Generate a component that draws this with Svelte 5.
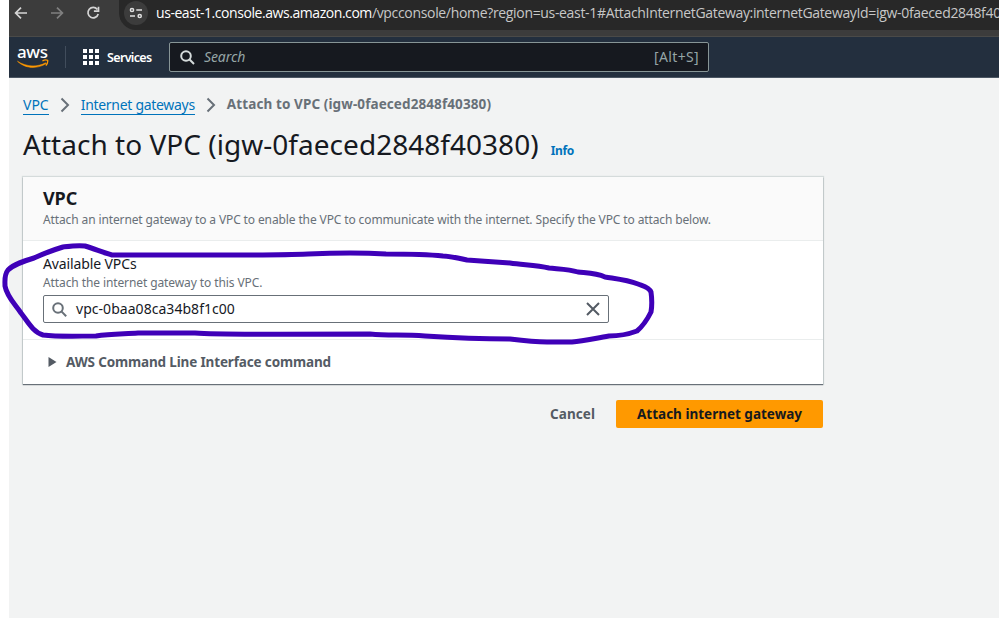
<script>
  const dots = [0, 6, 12];
</script>

<div class="screen">
  <div class="browser">
    <svg class="navicons" width="100" height="30" viewBox="0 0 100 30" fill="none" stroke-width="1.7">
      <path d="M18 13H7M12 7.6 6.6 13 12 18.4" stroke="#d5d5d5" />
      <path d="M42 13h11M48 7.6 53.400 13 48 18.400" stroke="#808080" />
      <path d="M88.300 9.400A5.200 5.200 0 1 0 89.200 14M89.500 6.800v4.400h-4.600" stroke="#d5d5d5" />
    </svg>
    <div class="address">
      <div class="site">
        <svg width="14" height="12" viewBox="0 0 14 12" fill="none" stroke="#e0e0e0" stroke-width="1.5">
          <circle cx="3" cy="3" r="1.600" /><path d="M7.300 3H13M1 9h5" /><circle cx="10.700" cy="9" r="1.600" />
        </svg>
      </div>
      <div class="url"><span class="host">us-east-1.console.aws.amazon.com</span><span class="path">/vpcconsole/home?region=us-east-1#AttachInternetGateway:internetGatewayId=igw-0faeced2848f40380</span></div>
    </div>
  </div>

  <nav>
    <div class="logo">
      <span>aws</span>
      <svg width="33" height="9" viewBox="0 0 33 9">
        <path d="M.4 2.200C9 8 21 8.300 28.600 3.800l.5.8C20.500 10.200 8 9.900.4 2.200Z" fill="#f90" stroke="#f90" stroke-width=".5" />
        <path d="M25.400 2c2-1.200 4.500-1 5.300-.6.200 1.600-.7 3.900-1.900 5.100" fill="none" stroke="#f90" stroke-width="1.300" />
      </svg>
    </div>
    <div class="sep"></div>
    <div class="services">
      <svg width="16" height="16" viewBox="0 0 16 16" fill="#fff">
        {#each dots as y}{#each dots as x}<rect {x} {y} width="4" height="4" />{/each}{/each}
      </svg>
      <span>Services</span>
    </div>
    <div class="search">
      <svg width="15" height="15" viewBox="0 0 15 15" fill="none" stroke="#d5dbdb" stroke-width="2">
        <circle cx="6" cy="6" r="4.800" /><path d="m9.300 9.300 4.700 4.700" />
      </svg>
      <span class="hint">Search</span><span class="key">[Alt+S]</span>
    </div>
  </nav>

  <main>
    <div class="crumbs">
      <a class="c1" href="#vpc">VPC</a>
      <svg width="10" height="16" viewBox="0 0 10 16"><path d="m1.500 1.500 6.500 6.500-6.500 6.500" /></svg>
      <a class="c2" href="#igw">Internet gateways</a>
      <svg width="10" height="16" viewBox="0 0 10 16"><path d="m1.500 1.500 6.500 6.500-6.500 6.500" /></svg>
      <span class="c3">Attach to VPC (igw-0faeced2848f40380)</span>
    </div>
    <div class="title"><h1>Attach to VPC (igw-0faeced2848f40380)</h1><a href="#info">Info</a></div>

    <section class="card">
      <header>
        <h2>VPC</h2>
        <p>Attach an internet gateway to a VPC to enable the VPC to communicate with the internet. Specify the VPC to attach below.</p>
      </header>
      <div class="field">
        <div class="label">Available VPCs</div>
        <div class="desc">Attach the internet gateway to this VPC.</div>
        <div class="input">
          <svg width="15" height="15" viewBox="0 0 15 15" fill="none" stroke="#687078" stroke-width="2">
            <circle cx="6" cy="6" r="4.800" /><path d="m9.400 9.400 4.800 4.800" />
          </svg>
          <span>vpc-0baa08ca34b8f1c00</span>
          <svg class="clear" width="14" height="14" viewBox="0 0 14 14" fill="none" stroke="#545b64" stroke-width="2">
            <path d="m1 1 12 12M13 1 1 13" />
          </svg>
        </div>
      </div>
      <div class="cli">
        <svg width="9" height="10" viewBox="0 0 9 10"><path d="M.5 0 8.500 5 .5 10Z" fill="#545b64" /></svg>
        <span>AWS Command Line Interface command</span>
      </div>
    </section>

    <div class="actions">
      <span class="cancel">Cancel</span>
      <button>Attach internet gateway</button>
    </div>
  </main>

  <svg class="marker" width="999" height="618" viewBox="0 0 999 618">
    <path d="M112 255C104 253 95 249 85 246C78 245 71 246 63 247C53 250 43 254 34 258C24 261 14 264 8 270C4 275 5 280 5 286C7 297 15 304 21 313C28 322 33 332 43 335C59 337 78 336 96 336C110 334 124 334 138 333H195C220 335 245 334 370 334C390 336 402 334 425 336C455 338 480 339 510 339C526 341 537 342 547 342H572C585 341 596 338 609 336C619 336 629 334 637 331C643 326 647 320 651 312C652 306 652 299 651 292C649 287 643 286 638 284C627 280 617 279 605 277C596 273 586 273 578 272C569 269 558 269 549 268C536 265 523 265 510 263C497 262 481 261 467 260C458 258 449 256 443 256C424 254 408 254 386 254C354 252 330 253 308 254C284 255 260 255 232 255H112Z" />
  </svg>
</div>

<style>
  :global(body) { margin: 0; background: #fff; }
  * { box-sizing: border-box; }
  .screen {
    position: relative; width: 999px; height: 618px; overflow: hidden; padding-left: 9px;
    display: flex; flex-direction: column;
    font-family: "Noto Sans", "Open Sans", sans-serif; background: #fff; color: #16191f;
  }
  span, a, h1, h2, p, .label, .desc, .url { white-space: nowrap; }
  .browser { height: 37px; flex: none; background: #3c3c3c; border-bottom: 1px solid #4a4a48; display: flex; }
  .navicons { flex: none; }
  .address {
    flex: 1; min-width: 0; height: 30px; margin-left: 10px; padding-left: 5px;
    background: #282828; border-bottom-left-radius: 17px; display: flex; overflow: hidden;
  }
  .site { width: 24px; height: 24px; flex: none; margin-top: 1px; border-radius: 50%; background: #3c3c3c; display: flex; align-items: center; justify-content: center; }
  .url { margin-left: 8px; font: 14px/26px "Open Sans", "Noto Sans", sans-serif; color: #c7c7c7; }
  .host { color: #fff; letter-spacing: -0.44px; }
  .path { letter-spacing: -0.33px; }

  nav { height: 41px; flex: none; background: #232f3e; border-bottom: 1px solid #4b5663; display: flex; align-items: center; }
  .logo { width: 33px; height: 26px; margin-left: 8px; display: flex; flex-direction: column; color: #fff; }
  .logo span { font-size: 17px; line-height: 17px; height: 16px; font-weight: 500; text-align: center; letter-spacing: -0.4px; margin: -1px 3px 0 0; }
  .logo svg { flex: none; }
  .sep { width: 1px; height: 22px; background: #414d5c; margin-left: 15px; }
  .services { display: flex; align-items: center; margin-left: 17px; width: 86px; color: #fff; }
  .services span { font-size: 12.500px; font-weight: 600; margin-left: 8px; letter-spacing: -0.65px; }
  .search { width: 540px; height: 30px; border: 1px solid #879596; border-radius: 2px; background: #16191f; display: flex; align-items: center; padding: 0 9px 0 10px; }
  .hint { margin-left: 9px; margin-top: -1px; color: #95a5a6; font-size: 14px; font-style: italic; letter-spacing: -0.1px; }
  .key { margin-left: auto; margin-top: -1px; color: #95a5a6; font-size: 14px; letter-spacing: 0.35px; }

  main { flex: 1; background: #f2f3f3; padding: 17px 0 0 14px; }
  .crumbs { display: flex; align-items: center; height: 20px; font-size: 14px; line-height: 19px; }
  .crumbs a { color: #0073bb; text-decoration: none; border-bottom: 1px solid #0073bb; }
  .crumbs svg { margin: 0 11px; flex: none; fill: none; stroke: #687078; stroke-width: 2; }
  .crumbs .c3 { color: #687078; font-size: 13.500px; font-weight: 700; letter-spacing: 0.1px; margin-top: -1px; }
  .c2 { letter-spacing: -0.3px; }
  .title { display: flex; align-items: baseline; height: 62px; padding-top: 11px; }
  h1 { margin: 0; font-size: 28px; line-height: 36px; font-weight: 400; letter-spacing: 0.03px; }
  .title a { color: #0073bb; font-weight: 700; font-size: 12px; margin-left: 12px; text-decoration: none; letter-spacing: -0.3px; }
  .card { width: 800px; height: 207px; background: #fff; box-shadow: 0 1px 1px #687078, 0 0 1px 1px #d5dbdb; }
  header { height: 64px; background: #fafafa; border-bottom: 1px solid #eaeded; padding: 10px 20px 0; }
  h2 { margin: 0; font-size: 18px; line-height: 22px; font-weight: 700; letter-spacing: -0.1px; }
  p { margin: 1px 0 0; font-size: 12px; line-height: 20px; color: #687078; letter-spacing: -0.12px; }
  .field { height: 99px; padding: 13px 20px 0; border-bottom: 1px solid #eaeded; }
  .label { font-size: 14px; line-height: 20px; letter-spacing: -0.12px; }
  .desc { font-size: 12px; line-height: 18px; color: #687078; letter-spacing: -0.1px; }
  .input { width: 566px; height: 28px; margin-top: 3px; border: 1px solid #687078; border-radius: 2px; display: flex; align-items: center; padding: 0 8px; font-size: 14px; }
  .input span { margin: -1px 0 0 9px; letter-spacing: 0.04px; }
  .clear { margin-left: auto; }
  .cli { height: 44px; padding: 0 25px; display: flex; align-items: center; font-size: 13.500px; font-weight: 700; color: #545b64; }
  .cli span { margin: -1px 0 0 9px; letter-spacing: -0.15px; }
  .actions { width: 800px; margin-top: 16px; display: flex; justify-content: flex-end; align-items: center; }
  .cancel { font-size: 13.500px; font-weight: 700; color: #545b64; margin: -1px 21px 0 0; letter-spacing: 0.05px; }
  button { width: 207px; height: 28px; padding: 0 0 1px; border: 0; border-radius: 2px; background: #f90; color: #16191f; font-family: inherit; font-size: 13.500px; font-weight: 700; letter-spacing: 0; white-space: nowrap; }
  .marker { position: absolute; left: 0; top: 0; pointer-events: none; fill: none; stroke: #3f00b8; stroke-width: 5; stroke-linejoin: round; }
</style>
